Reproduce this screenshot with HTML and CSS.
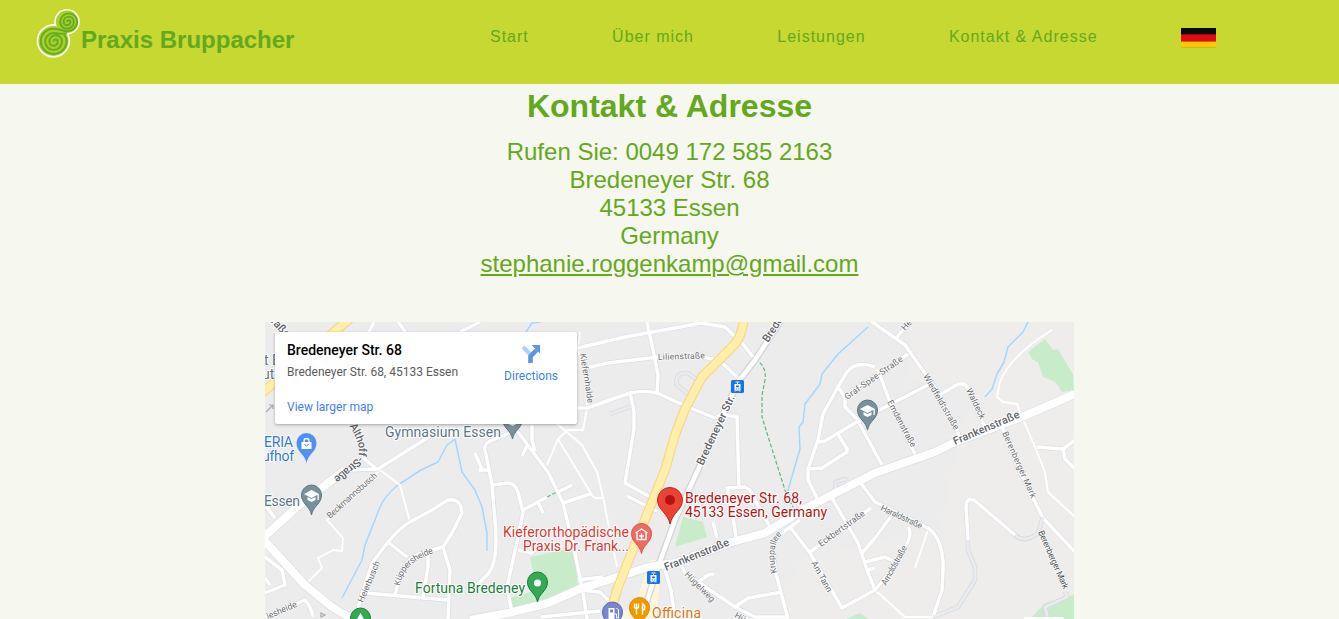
FILE: index.html
```html
<!DOCTYPE html>
<html lang="de">
<head>
<meta charset="utf-8">
<title>Praxis Bruppacher</title>
<link rel="stylesheet" href="styles.css">
</head>
<body>
<header class="header">
  <a class="brand">
    <svg class="logo" width="46" height="52" viewBox="35 8 46 52">
      <circle cx="53.4" cy="40.9" r="16.800" fill="#fafbea"/><circle cx="67" cy="21.800" r="12.800" fill="#fafbea"/>
      <circle cx="53.4" cy="40.9" r="15" fill="#a9d02f"/><circle cx="67" cy="21.800" r="11.200" fill="#a9d02f"/>
      <path d="M53.600 41.500a2.100 2.100 0 0 1 4.200 0a4.200 4.200 0 0 1-8.400 0a6.300 6.300 0 0 1 12.600 0a8.400 8.400 0 0 1-16.800 0a8.400 8.400 0 0 1 8.400-8.400c5 0 7.500 1.500 13 0M66.600 41a12.900 12.900 0 0 1-25.800 0a12.500 12.500 0 0 1 12.600-12.300c6 0 9 2.500 14.500 2.500a9.700 9.700 0 0 0 9.300-9.300a8.500 8.500 0 0 0-17 0a6.800 6.800 0 0 0 13.600 0a5.100 5.100 0 0 0-10.200 0a3.400 3.400 0 0 0 6.800 0a1.700 1.700 0 0 0-3.400 0M66.600 41c0-3-1-4.500-2.500-6.500" fill="none" stroke="#67ab20" stroke-width="2"/>
    </svg>
    <span class="brand-name">Praxis Bruppacher</span>
  </a>
  <nav class="nav">
    <a>Start</a><a>Über mich</a><a>Leistungen</a><a>Kontakt &amp; Adresse</a>
    <span class="flag"></span>
  </nav>
</header>
<main class="contact">
  <h1 class="title">Kontakt &amp; Adresse</h1>
  <address class="address">
    <span>Rufen Sie: 0049 172 585 2163</span>
    <span>Bredeneyer Str. 68</span>
    <span>45133 Essen</span>
    <span>Germany</span>
    <a class="mail">stephanie.roggenkamp@gmail.com</a>
  </address>
  <div class="map">
    <svg class="map-canvas" width="809" height="297" viewBox="265 322 809 297">
      <defs>
        <g id="minor">
          <path d="M575 349L582 347L625 337L675 328L701 323L725 327L743 344L753 357"/>
          <path d="M582 369L608 363L658 357M700 356L720 361L738 378M647 322L652 345L658 375L657 392"/>
          <path d="M575 408L587 408L630 393Q645 390 657 393L688 407L715 418L722 414L737 417L739 487M736 537L732 510L727 488L745 487Q752 490 755 500L770 527"/>
          <path d="M630 393L634 412L634 429L625 483L652 498L662 507M627 496L657 511"/>
          <path d="M515 428L548 472L563 503L575 553L583 593L587 619M532 425L532 440L535 451M528 444L522 456"/>
          <path d="M512 432L490 441Q484 444 485 450L492 485L495 520Q499 563 487 575L470 592M475 453L483 472M479 470H488"/>
          <path d="M492 485L508 483Q516 484 518 492L523 512L518 537L507 587L512 613M523 510L547 497M558 492L572 485M538 502L543 513M563 503L590 494M518 550L532 553L540 545"/>
          <path d="M358 610L360 600L372 563L388 542Q402 526 410 522L432 510L448 500Q461 498 462 513L452 533L443 547L450 570L448 619"/>
          <path d="M388 542L407 557M443 547L425 552Q405 558 400 577L395 595M365 593L448 600M428 553L428 567L423 597"/>
          <path d="M265 557L282 570L285 585L265 593M265 578L270 585M265 617L305 600Q311 606 313 617M265 505L275 518"/>
          <path d="M345 470L378 469L432 435M378 470L362 457M374 322L366 338M398 322L415 345M460 332L480 322"/>
          <path d="M875 367Q856 360 847 372L838 387L823 414L818 440L808 469L808 480L817 498M838 387L845 397L845 407L857 419L882 465"/>
          <path d="M818 442L825 441L860 420L928 385M838 434L847 449L847 452L822 468L808 469M843 398L908 354"/>
          <path d="M868 319L905 345L912 355L940 395L958 432L960 440M897 337L910 322M878 370L890 402L915 454M940 395L958 384Q966 382 969 391L985 428"/>
          <path d="M1002 427L1020 472L1043 518L1075 552M1037 447L1063 449L1075 440M1063 449L1065 459L1075 469"/>
          <path d="M860 482L875 502L928 528Q944 540 943 570L942 590L933 617M892 515L875 538L862 553M908 527Q912 532 908 541L900 560L875 590L842 608L810 553L790 527M865 562L885 557L897 563M810 552L871 508M832 498L858 543L867 570L875 590"/>
          <path d="M800 520L782 533L773 542L775 570L788 619M682 567L685 573L735 607L755 617L788 617M735 607L748 598L782 592M698 582L708 575L714 574M713 522L717 538M867 570L875 568"/>
          <path d="M578 580L603 577M580 590L600 592L612 604M541 617L600 611M665 570L671 590L675 619"/>
          <path d="M968 540L966 507Q966 497 974 500L1015 535"/>
        </g>
        <g id="pale">
          <path d="M610 414L632 406M688 394L677 385Q674 372 688 373L697 380M835 489L836 482L845 479L848 483"/>
          <path d="M933 617L958 607L975 580L975 567L968 550L968 540M1015 535Q1025 544 1038 533L1043 517M1065 592L1067 597L1045 607L1048 619"/>
        </g>
        <g id="major">
          <path d="M265 536L298 506L345 470M262 538L305 585L332 607Q350 619 360 619"/>
          <path d="M470 620L508 613L548 603L582 588L608 580L648 567L675 563L732 542L765 533L808 507L875 473L935 452L955 442L1022 417L1075 394"/>
        </g>
        <path id="yellow" d="M744 318Q742 337 734 345L702 377L685 409L675 435L665 470L642 527L618 587L608 620M353 316L328 337L262 393"/>
        <path id="pin" d="M0 19C-1.500 10-10 8-10-1A10 10 0 0 1 10-1C10 8 1.500 10 0 19Z"/>
        <g id="school"><use href="#pin" fill="#78909c" stroke="#5f7783"/><path d="M-7.500-2L0-6L7.500-2L0 2ZM-4 1V4L0 6L4 4V1L0 3ZM6-2H7.300V4H6Z" fill="#fff"/></g>
        <g id="tram"><rect x="-6.500" y="-6.500" width="13" height="13" rx="1.500" fill="#1a73e8"/><path d="M-2-4.500H2M0-4V-2" stroke="#fff"/><path d="M-3-2.500H3V4H-3ZM-1.500-1H1.500V.7H-1.500ZM-1.700 2H-.7V3H-1.700ZM.7 2H1.700V3H.7Z" fill="#fff" fill-rule="evenodd"/><path d="M-2.500 5L-1 3.500M2.500 5L1 3.500" stroke="#fff"/></g>
        <path id="althoff" d="M349 426Q362 445 358 457Q345 469 327 483"/>
        <path id="kuppers" d="M400 586Q403 562 434 553"/>
        <path id="krupp" d="M777 573Q769 545 784 532"/>
      </defs>
      <rect x="265" y="322" width="809" height="297" fill="#ececec"/>
      <path d="M910 322H1074V619H780L800 560L880 540L940 530L960 430L980 390L910 380Z" fill="#efedec"/>
      <path d="M530 557L573 548L578 585L555 600L512 610L510 598L537 590ZM1028 352L1045 339L1053 350L1058 349L1073 374L1074 390L1062 392L1055 382L1043 377L1038 362L1033 360ZM675 547L683 517L703 522L707 537ZM1074 595L1045 603L1030 619H1074ZM846 619L860 613L868 619Z" fill="#c8ecc9"/>
      <path d="M650 560L662 560L656 619H610L635 605Z" fill="#fdf6df"/>
      <path class="water" d="M455 439L447 445L438 462L421 470L398 485Q383 497 378 512L365 545L362 560L342 598M455 439L462 472L475 490L482 507L487 533V551M541 322L532 323L526 332M868 327L838 354L822 374L820 384L805 404L803 422L799 427L800 449L788 490L792 503M1028 322L1023 332L1008 347L1004 362L997 374L992 389L985 397"/>
      <path class="trail" d="M580 332L578 349L587 385L587 408L583 430L568 430L558 439L547 465M555 422L582 445L597 472L603 497L617 567M558 439L578 472L592 495M590 494L595 498H603M380 470L327 520L343 538L342 551L333 550L318 558L322 568L305 585M380 470L400 485L410 522M1052 330Q1010 356 1000 382L997 397L1003 402L1017 404L1022 417L1035 447L1045 472L1048 492L1075 517M928 530L915 568M875 590L905 617L935 617"/>
      <path class="hike" d="M755 359Q767 366 765 380L762 395L762 417L772 449L785 490L793 507M547 497L557 492"/>
      <g class="line"><use href="#minor" stroke="#dcdee2" stroke-width="4.800"/><use href="#pale" stroke="#d5d8de" stroke-width="4.500"/><use href="#major" stroke="#dcdee2" stroke-width="9.500"/><path d="M782 319L755 360L738 382L697 472L675 520L657 570L645 607" stroke="#d2d4d8" stroke-width="7"/></g>
      <g class="line"><use href="#minor" stroke="#fff" stroke-width="3.500"/><use href="#pale" stroke="#e9ebef" stroke-width="3"/><use href="#major" stroke="#fff" stroke-width="8"/><path d="M782 319L755 360L738 382L697 472L675 520L657 570L645 607" stroke="#fff" stroke-width="4.500"/></g>
      <g class="line"><use href="#yellow" stroke="#fad58a" stroke-width="10"/><use href="#yellow" stroke="#ffefab" stroke-width="7.500"/></g>
      <path d="M266 412L273 405M269 405H273V409M321 613L325 615L321 617Z" fill="none" stroke="#aaa" stroke-width="1.200"/>

      <g class="street">
        <text><textPath href="#althoff" textLength="66">Althoff-Straße</textPath></text>
        <text transform="translate(268 319) rotate(47)" textLength="26">traße</text>
        <text transform="translate(330 519) rotate(-42)" class="thin" textLength="64">Beckmannsbusch</text>
        <text transform="translate(363 603) rotate(-67)" class="thin" textLength="44">Heierbusch</text>
        <text class="thin"><textPath href="#kuppers" textLength="50">Küppersheide</textPath></text>
        <text transform="translate(268 619) rotate(-23)" class="thin" textLength="32">iesheide</text>
        <text transform="translate(580 354) rotate(81)" class="thin" textLength="50">Kiefernhalde</text>
        <text transform="translate(658 360) rotate(-2)" class="thin" textLength="47">Lilienstraße</text>
        <text transform="translate(768 343) rotate(-57)" textLength="54">Bredeneyer</text>
        <text transform="translate(703 466) rotate(-65)" textLength="76">Bredeneyer Str.</text>
        <text transform="translate(847 400) rotate(-35)" class="thin" textLength="69">Graf-Spee-Straße</text>
        <text transform="translate(905 331) rotate(-48)" class="thin">Heim</text>
        <text transform="translate(923 376) rotate(60)" class="thin" textLength="63">Wiedfeldtstraße</text>
        <text transform="translate(887 402) rotate(62)" class="thin" textLength="52">Emdenstraße</text>
        <text transform="translate(966 390) rotate(64)" class="thin" textLength="33">Waldeck</text>
        <text transform="translate(955 445) rotate(-23)" textLength="71">Frankenstraße</text>
        <text transform="translate(1002 433) rotate(66)" class="thin" textLength="72">Berenberger Mark</text>
        <text transform="translate(1038 532) rotate(66)" class="thin dark" textLength="63">Berenberger Mark</text>
        <text transform="translate(880 510) rotate(25)" class="thin" textLength="45">Haraldstraße</text>
        <text transform="translate(886 586) rotate(-61)" class="thin" textLength="44">Arnoldstraße</text>
        <text transform="translate(821 547) rotate(-36)" class="thin" textLength="55">Eckbertstraße</text>
        <text transform="translate(811 563) rotate(61)" class="thin" textLength="34">Am Tann</text>
        <text class="thin"><textPath href="#krupp" textLength="41">Kruppallee</textPath></text>
        <text transform="translate(666 571) rotate(-22)" textLength="69">Frankenstraße</text>
        <text transform="translate(684 575) rotate(45)" class="thin" textLength="39">Hügelweg</text>
        <text transform="translate(734 617) rotate(28)" class="thin">Hügelweg</text>
      </g>
      <g class="poi">
        <text x="264" y="365" class="grey">t E</text><text x="262" y="379" class="grey">uts</text>
        <text x="264" y="447" class="blue" textLength="29">ERIA</text><text x="262" y="461" class="blue" textLength="32">ufhof</text>
        <text x="264" y="506" class="grey" textLength="36">Essen</text>
        <text x="385" y="437" class="grey" textLength="116">Gymnasium Essen</text>
        <text x="415" y="593" class="green" textLength="110">Fortuna Bredeney</text>
        <text x="503" y="537" class="red" textLength="126">Kieferorthopädische</text><text x="523" y="551" class="red" textLength="106">Praxis Dr. Frank...</text>
        <text x="685" y="503" class="crimson" textLength="117">Bredeneyer Str. 68,</text><text x="685" y="517" class="crimson" textLength="142">45133 Essen, Germany</text>
        <text x="652" y="618" class="orange" textLength="49">Officina</text>
      </g>
      <use href="#school" x="311.500" y="496"/><use href="#school" x="867.500" y="411"/><use href="#school" x="512.500" y="420"/>
      <use href="#tram" x="737.500" y="386.500"/><use href="#tram" x="653.500" y="577.500"/>
      <g transform="translate(306.500 444)"><use href="#pin" fill="#4f8ff7"/><path d="M-5-2H5V5H-5Z" fill="#fff"/><path d="M-2.500-2V-3A2.500 2.500 0 0 1 2.500-3V-2" fill="none" stroke="#fff" stroke-width="1.300"/><path d="M-2 0Q0 4 2 0" fill="none" stroke="#4f8ff7"/></g>
      <g transform="translate(537.500 583)"><use href="#pin" fill="#34a853" stroke="#188038"/><circle r="3.500" fill="#fff"/></g>
      <g transform="translate(360.500 619)"><use href="#pin" fill="#34a853" stroke="#188038"/><path d="M0-6L4 1H-4Z" fill="#fff"/></g>
      <g transform="translate(641.500 534.500)"><use href="#pin" fill="#ec6c62" stroke="#df5148"/><path d="M-6-1.500L0-5.500L6-1.500M-4.500-2V5H4.500V-2M0-1V4M-2.500 1.500H2.500" fill="none" stroke="#fff" stroke-width="1.300"/></g>
      <g transform="translate(612.500 613)"><use href="#pin" fill="#7986cb" stroke="#5c6bc0"/><path d="M-4-5H2V6H-4Z" fill="#fff"/><path d="M-2.500-3.500H.5V-.5H-2.500Z" fill="#7986cb"/><path d="M2 1H4V5H6V-3L4-5" fill="none" stroke="#fff"/></g>
      <g transform="translate(639.500 608.500)"><use href="#pin" fill="#f29900" stroke="#e58600"/><path d="M-5-5V-1Q-3 1-1-1V-5M-3-5V6M3 6V-5Q6-3 5 1H3" fill="none" stroke="#fff" stroke-width="1.400"/></g>
      <path d="M670 524C668 513 657.500 510 657.500 500A12.500 12.500 0 0 1 682.500 500C682.500 510 672 513 670 524Z" fill="#ea4335" stroke="#c5221f"/><circle cx="670" cy="500" r="5" fill="#b31412"/>
      <rect x="1024" y="617" width="40" height="6" rx="2" fill="#fff"/>
    </svg>
    <section class="place-card">
      <div class="place-info">
        <strong class="place-name">Bredeneyer Str. 68</strong>
        <span class="place-address">Bredeneyer Str. 68, 45133 Essen</span>
        <a class="link">View larger map</a>
      </div>
      <a class="directions">
        <svg width="20" height="20" viewBox="0 0 20 20"><path d="M2 3L10 11" stroke="#b5d0f6" stroke-width="4"/><path d="M9.500 19V12.500L15.500 6" fill="none" stroke="#5b97e9" stroke-width="4.600"/><path d="M10.500 1H19V9.500Z" fill="#5b97e9"/></svg>
        <span>Directions</span>
      </a>
    </section>
  </div>
</main>
</body>
</html>
```
FILE: styles.css
```css
* { box-sizing: border-box; }
body {
  margin: 0;
  height: 619px;
  overflow: hidden;
  background: #f6f7ef;
  color: #64a820;
  font-family: "Liberation Sans", Arial, sans-serif;
}
.header {
  display: flex;
  height: 84px;
  background: #c6d831;
}
.brand {
  display: flex;
  width: 490px;
  padding: 8px 0 0 35px;
}
.logo { flex: none; }
.brand-name {
  padding-top: 18px;
  font-size: 24px;
  font-weight: bold;
  line-height: 28px;
}
.nav {
  display: flex;
  gap: 83.3px;
  padding-top: 27px;
  font-size: 16px;
  line-height: 19px;
  letter-spacing: 1px;
  white-space: nowrap;
}
.flag {
  width: 35px;
  height: 20px;
  margin-top: 1px;
  background: linear-gradient(#0a0a0a 0 6px, #8e0b0b 6px 7px, #e00b10 7px 13px, #ed5510 13px 14px, #f8cc08 14px 18px, #dcae0c 20px);
}
.contact {
  display: flex;
  flex-direction: column;
  align-items: center;
}
.title {
  margin: 3px 0 0;
  font-size: 32px;
  line-height: 38px;
}
.address {
  display: flex;
  flex-direction: column;
  align-items: center;
  margin-top: 13px;
  font-size: 24px;
  font-style: normal;
  line-height: 28px;
}
.mail { text-decoration: underline; }
.map {
  display: grid;
  width: 809px;
  height: 297px;
  margin-top: 44px;
  overflow: hidden;
  font-family: Roboto, sans-serif;
}
.map-canvas, .place-card { grid-area: 1 / 1; }
.place-card {
  display: flex;
  justify-content: space-between;
  width: 302px;
  height: 92px;
  margin: 10px 0 0 10px;
  padding: 10px 19px 0 12px;
  background: #fff;
  border-radius: 2px;
  box-shadow: 0 1px 3px rgba(0, 0, 0, .3);
  z-index: 1;
}
.place-info {
  display: flex;
  flex-direction: column;
  font-size: 12px;
  line-height: 16px;
}
.place-name {
  color: #000;
  font-size: 14px;
  font-weight: 500;
}
.place-address {
  margin-top: 6px;
  color: #5b5b5b;
}
.link {
  margin-top: 19px;
  color: #427fed;
}
.directions {
  display: flex;
  flex-direction: column;
  align-items: center;
  padding-top: 2px;
  color: #427fed;
  font-size: 12px;
  line-height: 16px;
}
.directions svg { margin-bottom: 4px; }
.line, .water, .trail, .hike {
  fill: none;
  stroke-linejoin: round;
}
.water { stroke: #a5d7fc; stroke-width: 1.5; }
.trail { stroke: #fff; stroke-width: 1.8; }
.hike { stroke: #5cb97a; stroke-width: 1.2; stroke-dasharray: 4 2; }
.street text, .poi text {
  paint-order: stroke;
  stroke: #fff;
  stroke-width: 2px;
  stroke-linejoin: round;
}
.street { font-size: 11px; font-weight: 500; fill: #5f6368; }
.street .thin { font-size: 8.7px; font-weight: 400; fill: #686c70; }
.street textPath, .street .thin { stroke-width: 1.2px; }
.street .dark { fill: #484c50; }
.poi { font-size: 14px; }
.grey { fill: #5c7784; }
.blue { fill: #3277df; }
.green { fill: #188038; }
.red { fill: #d93831; }
.crimson { fill: #b31412; }
.orange { fill: #d9730b; }
```
